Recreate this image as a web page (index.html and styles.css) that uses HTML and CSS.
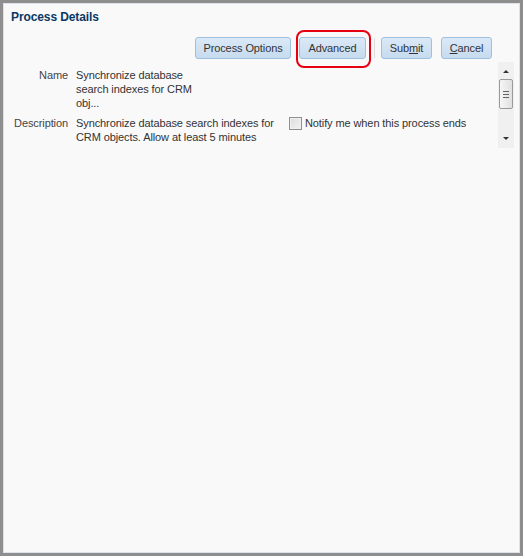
FILE: index.html
```html
<!DOCTYPE html>
<html>
<head>
<meta charset="utf-8">
<link rel="stylesheet" href="styles.css">
</head>
<body>
<div class="frame">
  <div class="dialog">
    <div class="title">Process Details</div>
    <div class="toolbar">
      <button class="btn btn-po">Process Options</button>
      <span class="highlight"><button class="btn btn-adv">Advanced</button></span>
      <span class="sep"></span>
      <button class="btn btn-sm">Sub<u>m</u>it</button>
      <button class="btn btn-sm btn-cancel"><u>C</u>ancel</button>
    </div>
    <div class="content">
      <div class="form">
        <div class="label">Name</div>
        <div class="value">Synchronize database<br>search indexes for CRM<br>obj...</div>
        <div></div>
        <div class="label">Description</div>
        <div class="value">Synchronize database search indexes for<br>CRM objects. Allow at least 5 minutes</div>
        <label class="notify"><span class="checkbox"></span>Notify me when this process ends</label>
      </div>
      <div class="scrollbar">
        <div class="arrow up"></div>
        <div class="thumb"><span></span><span></span><span></span></div>
        <div class="track"></div>
        <div class="arrow down"></div>
      </div>
    </div>
  </div>
</div>
</body>
</html>
```
FILE: styles.css
```css
html, body {
  margin: 0;
  padding: 0;
  background: #ffffff;
}
body {
  font-family: "Liberation Sans", Arial, sans-serif;
  font-size: 11px;
  color: #333;
}
.frame {
  width: 523px;
  height: 556px;
  box-sizing: border-box;
  border: 3px solid #8e8e8e;
  background: #8e8e8e;
}
.dialog {
  box-sizing: border-box;
  height: 100%;
  background: #f9f9fa;
  border: 1px solid #dde2ea;
  padding: 6px 5px 0 0;
}
.title {
  padding-left: 7px;
  font-size: 12px;
  line-height: 15px;
  font-weight: bold;
  color: #083863;
  letter-spacing: -0.1px;
}
.toolbar {
  display: flex;
  justify-content: flex-end;
  align-items: center;
  margin-top: 12px;
  padding-right: 22px;
  height: 22px;
}
.btn {
  box-sizing: border-box;
  height: 22px;
  padding: 0;
  border: 1px solid #9fc0de;
  border-radius: 3px;
  background: linear-gradient(#dbe9f7, #c6dbef);
  font-family: "Liberation Sans", Arial, sans-serif;
  font-size: 11px;
  color: #333;
  letter-spacing: -0.1px;
}
.btn u { text-decoration: underline; }
.btn-po { width: 96px; margin-right: 8px; }
.btn-adv { width: 67px; display: block; }
.btn-sm { width: 51px; }
.btn-cancel { margin-left: 9px; }
.highlight {
  position: relative;
  display: block;
}
.highlight::after {
  content: "";
  position: absolute;
  top: -7px;
  bottom: -9px;
  left: -3px;
  right: -5px;
  border: 2px solid #e60012;
  border-radius: 8px;
}
.sep {
  width: 1px;
  height: 20px;
  background: #dcdcdc;
  margin: 0 6px 0 8px;
}
.content {
  display: flex;
  margin-top: 3px;
}
.form {
  flex: 1;
  display: grid;
  grid-template-columns: 64px 205px auto;
  column-gap: 8px;
  row-gap: 6px;
  padding-top: 6px;
  line-height: 14px;
  align-content: start;
  letter-spacing: -0.1px;
}
.label {
  text-align: right;
  color: #444;
}
.value { color: #333; }
.notify {
  display: flex;
  align-items: flex-start;
  color: #333;
}
.checkbox {
  box-sizing: border-box;
  width: 13px;
  height: 13px;
  margin-top: 1px;
  margin-right: 3px;
  border: 1px solid #8f8f8f;
  background: linear-gradient(135deg, #dcdcdc, #f4f4f4);
  box-shadow: inset 0 0 0 1px #f0f0f0;
}
.scrollbar {
  width: 16px;
  height: 86px;
  display: flex;
  flex-direction: column;
  align-items: center;
  background: #f0f0f0;
}
.arrow {
  width: 0;
  height: 0;
  border-left: 3px solid transparent;
  border-right: 3px solid transparent;
}
.arrow.up {
  border-bottom: 3px solid #333;
  margin: 8px 0 6px;
}
.arrow.down {
  border-top: 3px solid #333;
  margin: 0 0 8px;
}
.track { flex: 1; }
.thumb {
  box-sizing: border-box;
  width: 14px;
  height: 30px;
  border: 1px solid #9a9a9a;
  border-radius: 2px;
  background: linear-gradient(90deg, #f6f6f6, #e0e0e0);
  display: flex;
  flex-direction: column;
  align-items: center;
  justify-content: center;
  gap: 2px;
}
.thumb span {
  width: 6px;
  height: 1px;
  background: #666;
}
```
